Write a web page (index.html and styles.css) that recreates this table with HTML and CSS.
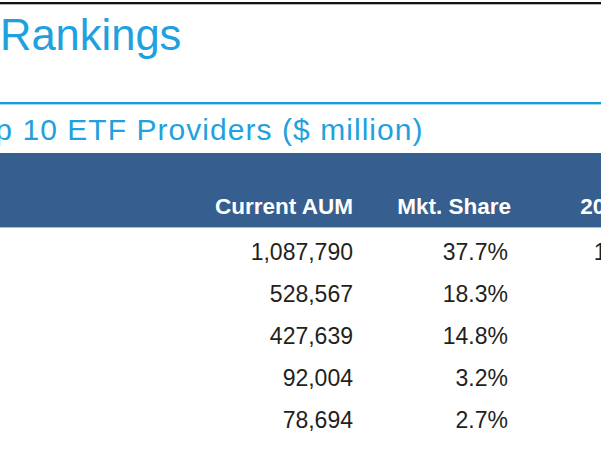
FILE: index.html
```html
<!DOCTYPE html>
<html lang="en">
<head>
<meta charset="utf-8">
<title>Rankings</title>
<link rel="stylesheet" href="styles.css">
</head>
<body>
<div class="page">
  <div class="topbar"></div>
  <h1 class="page-title">Rankings</h1>
  <div class="rule"></div>
  <h2 class="subtitle">Top 10 ETF Providers ($ million)</h2>
  <div class="table">
    <div class="thead">
      <div class="cell name"></div>
      <div class="cell num">Current AUM</div>
      <div class="cell num">Mkt. Share</div>
      <div class="cell num last">2019 AUM</div>
    </div>
    <div class="row">
      <div class="cell name"></div>
      <div class="cell num">1,087,790</div>
      <div class="cell num pct">37.7%</div>
      <div class="cell num last">1,020,463</div>
    </div>
    <div class="row">
      <div class="cell name"></div>
      <div class="cell num">528,567</div>
      <div class="cell num pct">18.3%</div>
      <div class="cell num last">486,102</div>
    </div>
    <div class="row">
      <div class="cell name"></div>
      <div class="cell num">427,639</div>
      <div class="cell num pct">14.8%</div>
      <div class="cell num last">391,870</div>
    </div>
    <div class="row">
      <div class="cell name"></div>
      <div class="cell num">92,004</div>
      <div class="cell num pct">3.2%</div>
      <div class="cell num last">84,312</div>
    </div>
    <div class="row">
      <div class="cell name"></div>
      <div class="cell num">78,694</div>
      <div class="cell num pct">2.7%</div>
      <div class="cell num last">71,905</div>
    </div>
  </div>
</div>
</body>
</html>
```

FILE: styles.css
```css
html, body {
  margin: 0;
  padding: 0;
  width: 601px;
  height: 451px;
  overflow: hidden;
  background: #ffffff;
}

.page {
  width: 601px;
  height: 451px;
  overflow: hidden;
  font-family: "Liberation Sans", Arial, sans-serif;
  display: flex;
  flex-direction: column;
}

.topbar {
  margin-top: 2px;
  height: 2px;
  background: #111111;
  border-bottom: 1px solid #b4b4b4;
  flex: none;
}

.page-title {
  margin: 0;
  box-sizing: border-box;
  height: 97px;
  padding: 9px 0 0 0;
  font-size: 43.5px;
  line-height: 43.5px;
  font-weight: normal;
  color: #1ea1de;
  flex: none;
}

.rule {
  height: 2px;
  background: #1a9ad6;
  border-bottom: 1px solid #a6d8f0;
  flex: none;
}

.subtitle {
  margin: 0 0 0 -38.5px;
  box-sizing: border-box;
  height: 48px;
  padding-top: 10px;
  font-size: 30px;
  line-height: 30px;
  font-weight: normal;
  letter-spacing: 1.05px;
  color: #1ea1de;
  white-space: nowrap;
  flex: none;
}

.table {
  display: flex;
  flex-direction: column;
  width: 700px;
}

.thead,
.row {
  display: grid;
  grid-template-columns: 200px 153px 158px 185px;
}

.thead {
  box-sizing: border-box;
  height: 75px;
  padding-bottom: 9px;
  align-items: end;
  background: #365e8e;
  border-bottom: 1px solid #aabdd4;
  color: #ffffff;
  font-size: 22.5px;
  line-height: 22px;
  font-weight: bold;
  margin-bottom: 3px;
}

.thead .last {
  padding-right: 9px;
}

.row {
  height: 42px;
  align-items: center;
  font-size: 23px;
  line-height: 42px;
  color: #231f20;
}

.cell {
  white-space: nowrap;
}

.num {
  text-align: right;
}

.pct {
  padding-right: 3px;
}
```
